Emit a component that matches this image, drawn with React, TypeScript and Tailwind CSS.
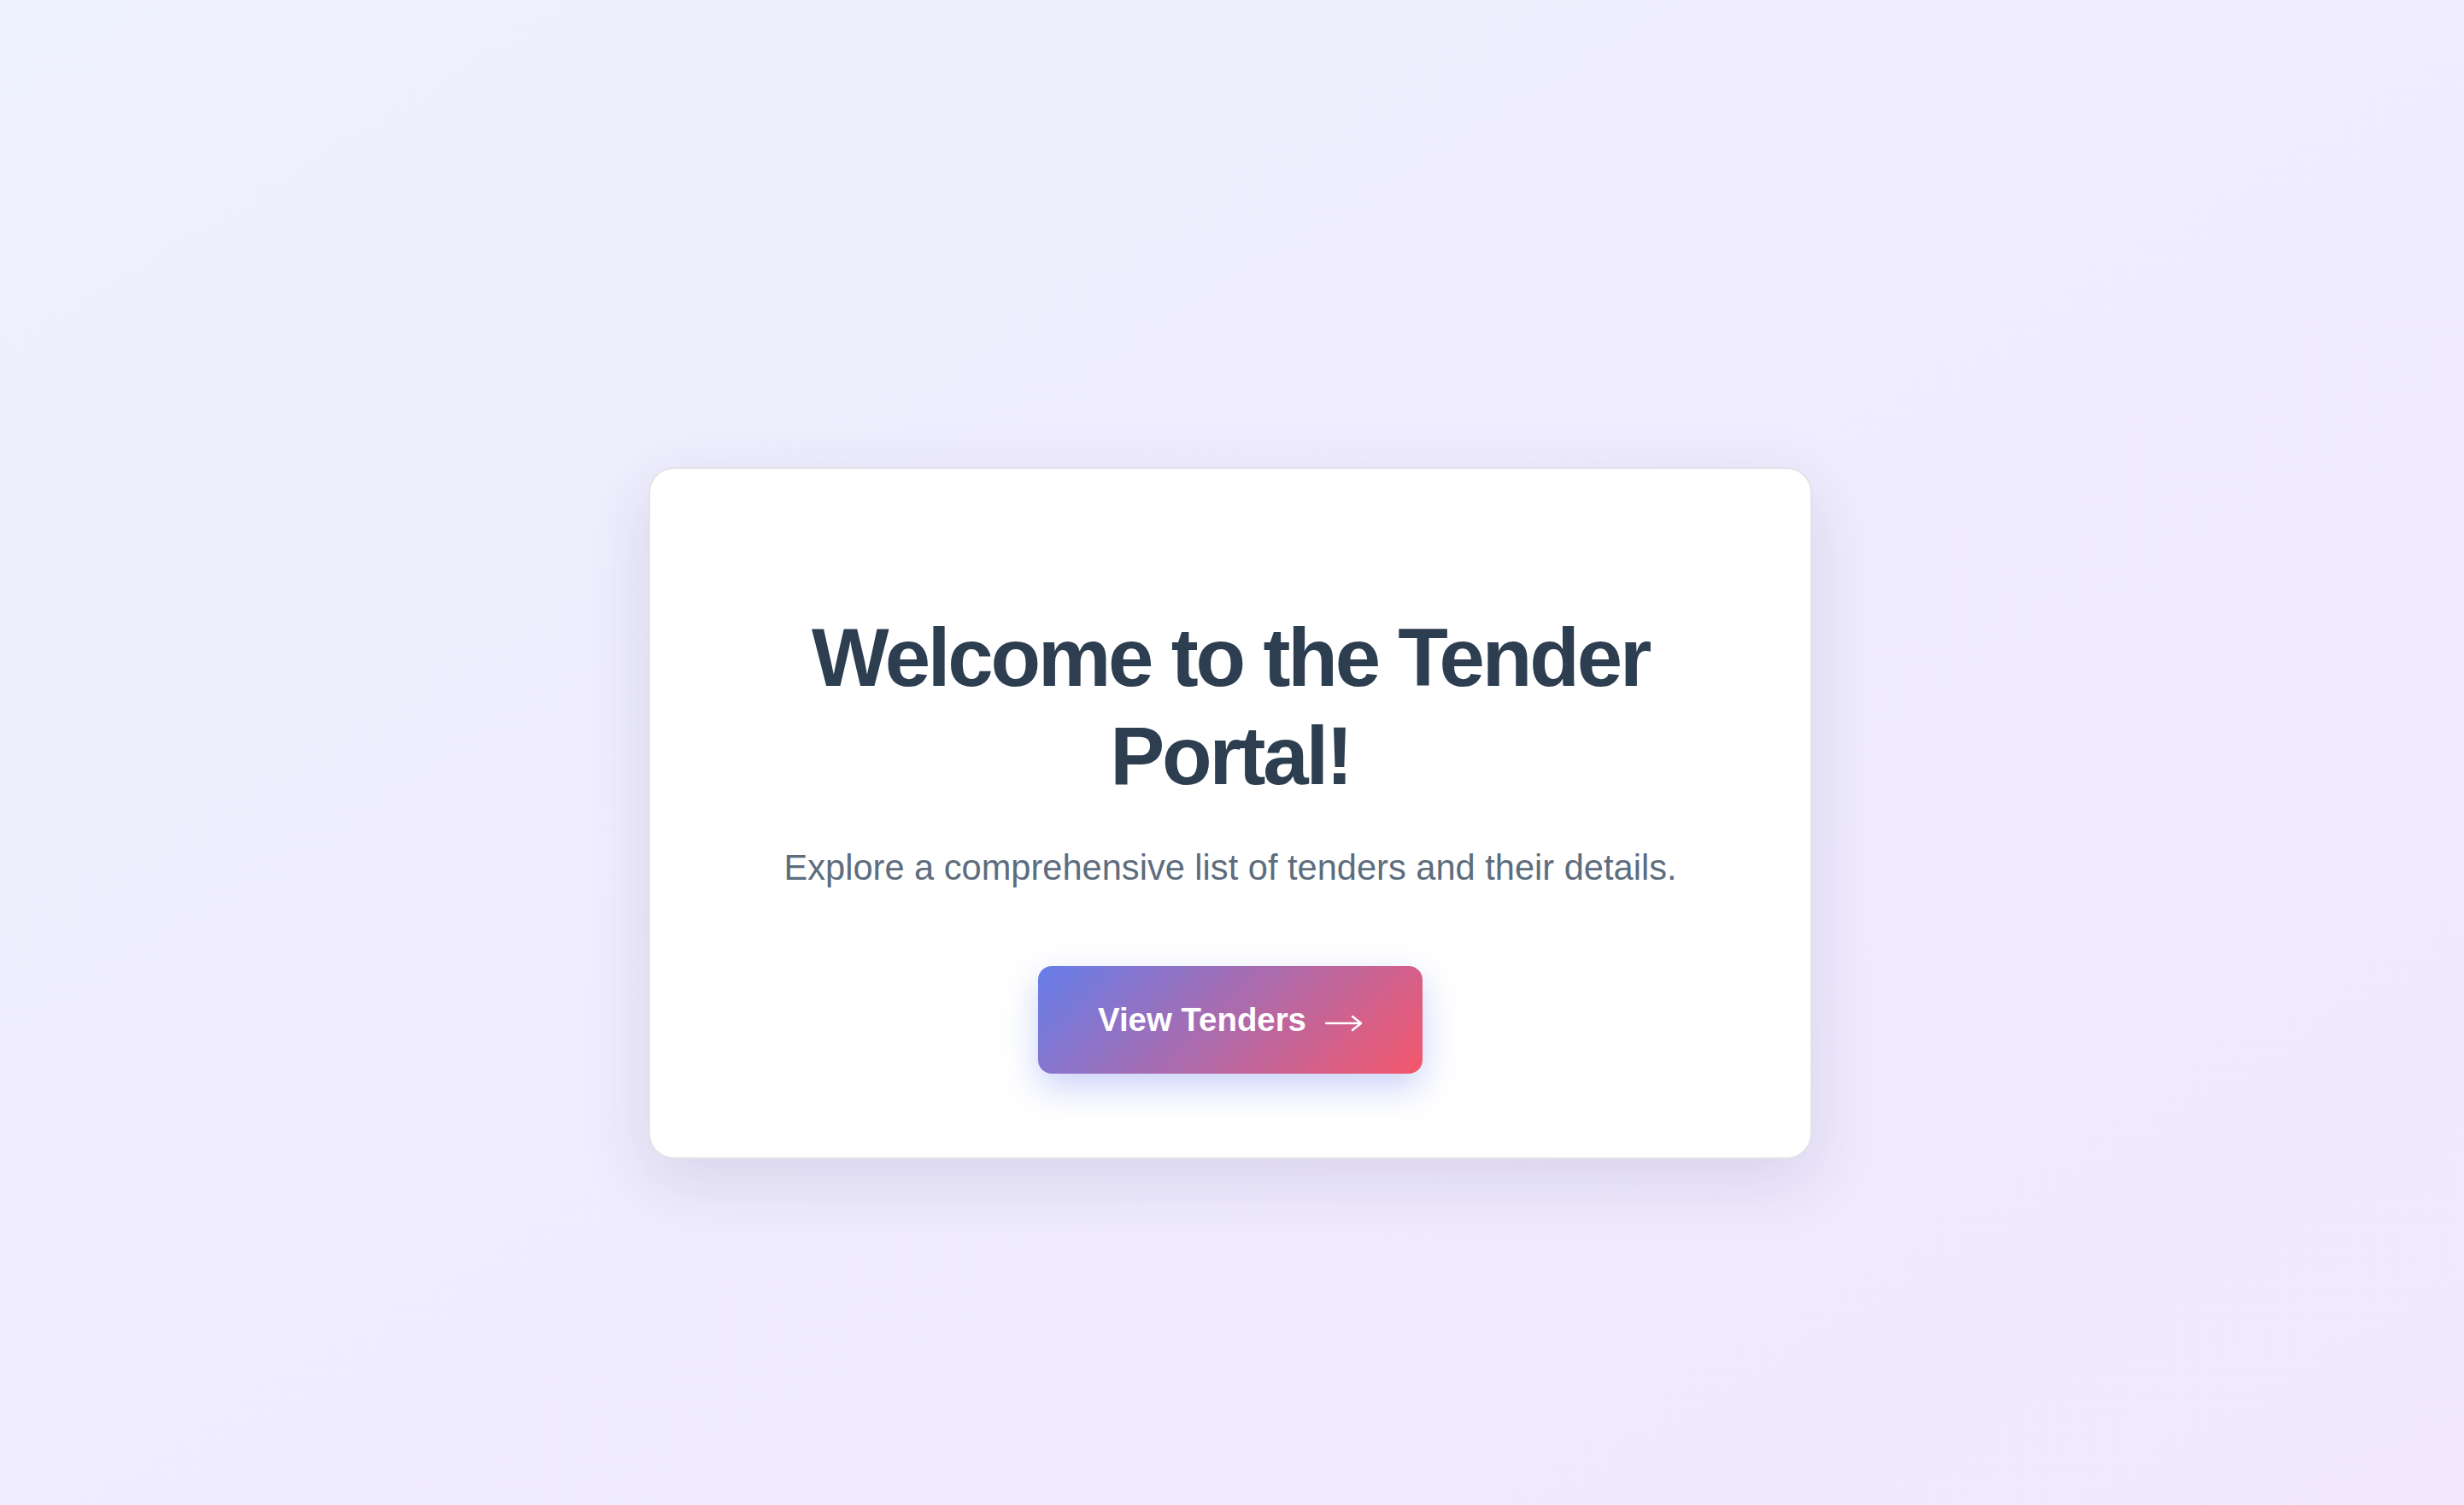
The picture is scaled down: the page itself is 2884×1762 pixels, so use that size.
import React from "react";

const ArrowRight = () => (
  <svg
    width="44"
    height="20"
    viewBox="0 0 44 20"
    fill="none"
    stroke="currentColor"
    strokeWidth="2.4"
    strokeLinecap="round"
    strokeLinejoin="round"
    className="translate-y-[4px]"
  >
    <line x1="1" y1="10" x2="42" y2="10" />
    <polyline points="32,2 42,10 32,18" />
  </svg>
);

const App = () => {
  return (
    <main
      className="min-h-screen w-full flex flex-col items-center pt-[547px] pr-[4px] bg-gradient-to-br from-[#eef1fe] to-[#f1e8fe]"
      style={{ fontFamily: '"Liberation Sans", Arial, Helvetica, sans-serif' }}
    >
      <section className="w-[1362px] bg-white border-2 border-[#e4e2ea] rounded-[30px] shadow-[0_24px_80px_rgba(50,45,90,0.13)] flex flex-col items-center pt-[163px] pb-[98px] px-[60px] text-center">
        <h1 className="text-[96px] leading-[1.2] font-bold text-[#2c3e50] tracking-[-3.2px] w-[1000px]">
          Welcome to the Tender Portal!
        </h1>
        <p className="mt-[43px] text-[41.6px] leading-[1.5] text-[#5d6d7e] whitespace-nowrap">
          Explore a comprehensive list of tenders and their details.
        </p>
        <button
          type="button"
          className="mt-[83px] w-[450px] h-[126px] rounded-[16px] flex items-center justify-center gap-[22px] text-white font-bold text-[38.4px] bg-[linear-gradient(135deg,#667eea_0%,#f5576c_100%)] shadow-[0_16px_40px_rgba(102,126,234,0.35)]"
        >
          <span>View Tenders</span>
          <ArrowRight />
        </button>
      </section>
    </main>
  );
};

export default App;
